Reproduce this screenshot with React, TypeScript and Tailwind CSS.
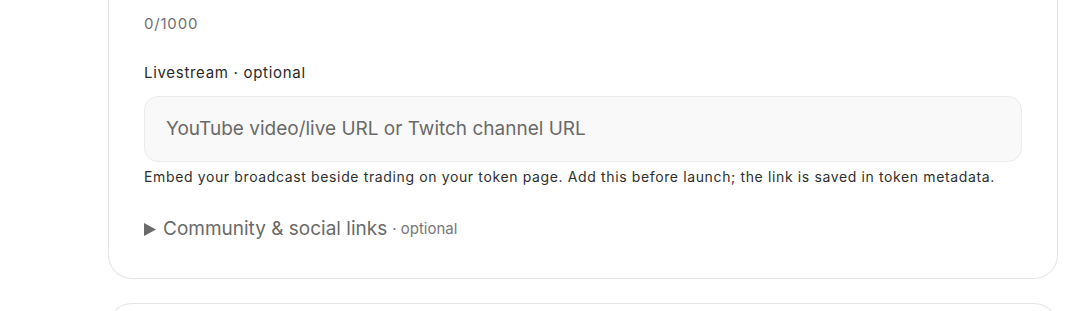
const font = { fontFamily: 'Inter, "Noto Sans", Arial, sans-serif' };

export default function App() {
  return (
    <div className="min-h-screen bg-white" style={font}>
      <div className="w-[950px] ml-[108px] flex flex-col gap-6 -mt-[40px]">
        <section className="rounded-b-[24px] border border-t-0 border-[#e5e5e5] px-[35px] pt-[52px] pb-[35px]">
          <div className="text-[15px] leading-[24px] tracking-[0.8px] text-[#707070]">0/1000</div>

          <div className="mt-[25px] text-[15px] leading-[24px] tracking-[0.7px] text-[#2a2a2a]">Livestream · optional</div>

          <div className="mt-[11px] h-[66px] rounded-[14px] border border-[#ebebeb] bg-[#f9f9f9] flex items-center px-[21px]">
            <span className="text-[19px] text-[#6a6a6a]">YouTube video/live URL or Twitch channel URL</span>
          </div>

          <p className="mt-[4px] text-[14px] leading-[22px] tracking-[0.63px] text-[#2f2f2f]">
            Embed your broadcast beside trading on your token page. Add this before launch; the link is saved in token metadata.
          </p>

          <div className="mt-[27px] flex items-center text-[#6a6a6a]">
            <svg width="12" height="13" viewBox="0 0 12 13" className="mr-[7px]">
              <path d="M0 0 L12 6.5 L0 13 Z" fill="#6a6a6a" />
            </svg>
            <span className="text-[19px] leading-[28px]">Community &amp; social links</span>
            <span className="ml-[5px] text-[15px] leading-[28px] text-[#777]">· optional</span>
          </div>
        </section>

        <section className="h-[60px] rounded-t-[24px] border border-b-0 border-[#e5e5e5]" />
      </div>
    </div>
  );
}
